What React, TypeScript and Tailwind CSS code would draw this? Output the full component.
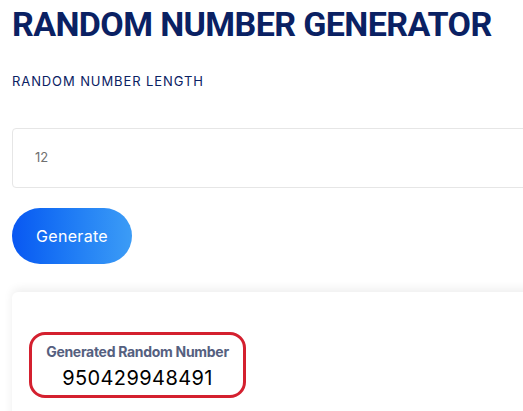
import React, { useState } from 'react';

export default function App() {
  const [length, setLength] = useState('12');
  const [result] = useState('950429948491');

  return (
    <div className="min-h-screen w-[523px] h-[411px] overflow-hidden bg-white font-['Inter',sans-serif]">
      <div className="pl-3 pt-[4px] w-[560px]">
        {/* Title */}
        <h1 className="text-[34px] leading-[40px] font-bold text-[#0a2163] font-['Roboto',sans-serif] tracking-[-0.6px]">
          RANDOM NUMBER GENERATOR
        </h1>

        {/* Length label */}
        <label className="block mt-[27px] text-[13px] leading-[20px] text-[#0a2163] tracking-[0.9px]">
          RANDOM NUMBER LENGTH
        </label>

        {/* Input */}
        <div className="mt-[37px] h-[60px] rounded-[4px] border border-[#e6e6e6] flex items-center">
          <input
            value={length}
            onChange={(e) => setLength(e.target.value)}
            className="w-full pl-[22px] text-[13px] text-[#707070] outline-none bg-transparent"
          />
        </div>

        {/* Generate button */}
        <button className="mt-[20px] w-[120px] h-[56px] rounded-full bg-gradient-to-r from-[#0a57f2] to-[#3c9cf6] text-white text-[16px] tracking-[0.3px] flex items-center justify-center">
          Generate
        </button>

        {/* Result card */}
        <div className="mt-[28px] h-[140px] bg-white rounded-tl-[6px] shadow-[0_-3px_10px_rgba(0,0,0,0.07)] pt-[40px] pl-[17px]">
          <div className="w-[217px] h-[66px] rounded-[16px] border-[3px] border-[#d4202f] flex flex-col items-center pt-[8px]">
            <div className="text-[14px] leading-[18px] font-bold text-[#55607f] tracking-[-0.3px]">
              Generated Random Number
            </div>
            <div className="mt-[5px] text-[20px] leading-[24px] text-black tracking-[0.4px]">
              {result}
            </div>
          </div>
        </div>
      </div>
    </div>
  );
}
